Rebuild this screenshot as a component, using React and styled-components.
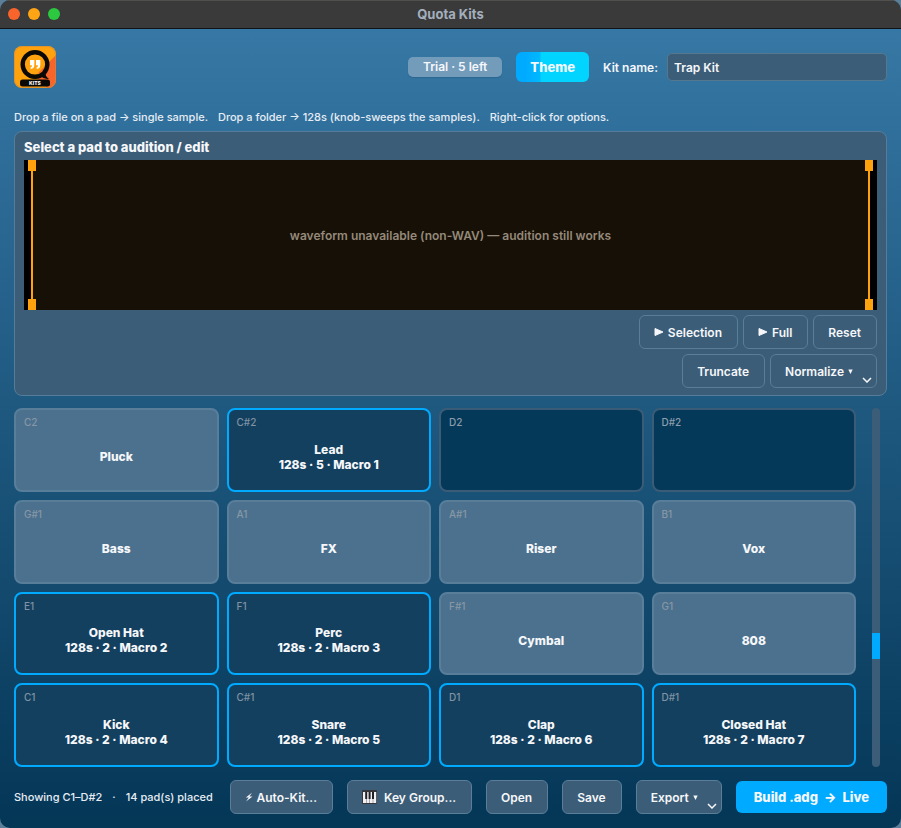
import React from "react";
import styled, { createGlobalStyle } from "styled-components";

const pads = [
  { note: "C2", name: "Pluck", kind: "plain" },
  { note: "C#2", name: "Lead", info: "128s · 5 · Macro 1", kind: "macro" },
  { note: "D2", kind: "empty" },
  { note: "D#2", kind: "empty" },
  { note: "G#1", name: "Bass", kind: "plain" },
  { note: "A1", name: "FX", kind: "plain" },
  { note: "A#1", name: "Riser", kind: "plain" },
  { note: "B1", name: "Vox", kind: "plain" },
  { note: "E1", name: "Open Hat", info: "128s · 2 · Macro 2", kind: "macro" },
  { note: "F1", name: "Perc", info: "128s · 2 · Macro 3", kind: "macro" },
  { note: "F#1", name: "Cymbal", kind: "plain" },
  { note: "G1", name: "808", kind: "plain" },
  { note: "C1", name: "Kick", info: "128s · 2 · Macro 4", kind: "macro" },
  { note: "C#1", name: "Snare", info: "128s · 2 · Macro 5", kind: "macro" },
  { note: "D1", name: "Clap", info: "128s · 2 · Macro 6", kind: "macro" },
  { note: "D#1", name: "Closed Hat", info: "128s · 2 · Macro 7", kind: "macro" },
];

const padColors = {
  plain: { back: "#4c718e", border: "#587e9a", note: "#8797a5" },
  macro: { back: "#14405f", border: "#00aaff", note: "#7f93a3" },
  empty: { back: "#053959", border: "#3b5c76", note: "#8c9dac" },
};

const Logo = () => (
  <svg width="42" height="42" viewBox="0 0 42 42" aria-hidden="true">
    <defs>
      <clipPath id="tile">
        <rect width="42" height="42" rx="8" />
      </clipPath>
    </defs>
    <g clipPath="url(#tile)">
      <rect width="42" height="42" fill="#ffa20d" />
      <path d="M42 9 L21 30 L33 42 H42Z" fill="#f7652b" />
      <circle cx="21" cy="18.500" r="12" fill="#ffa20d" />
      <path d="M31 20 A10 10 0 0 1 23 28Z" fill="#f7652b" />
      <circle cx="21" cy="18.500" r="12.300" fill="none" stroke="#0b0905" strokeWidth="4.400" />
      <path d="M25 29 L31 25 Q31 30 35 33 Q29 33 25 29Z" fill="#0b0905" />
      <path
        d="M16 14h4.300v5q0 3.400-3.300 4l-.7-1.200q1.700-.6 1.700-2.600H16z M22 14h4.300v5q0 3.400-3.300 4l-.7-1.200q1.700-.6 1.700-2.600H22z"
        fill="#fff"
      />
      <rect x="6" y="33.500" width="30" height="7" rx="2.500" fill="#0b0905" />
      <text
        x="21"
        y="39"
        textAnchor="middle"
        fontFamily="Inter, sans-serif"
        fontSize="5"
        fontWeight="800"
        fill="#fff"
      >
        KITS
      </text>
    </g>
    <rect x=".5" y=".5" width="41" height="41" rx="8" fill="none" stroke="#d18a3c" opacity=".6" />
  </svg>
);

const Play = () => (
  <svg width="10" height="10" viewBox="0 0 10 10" aria-hidden="true">
    <path
      d="M1 1.500v7L9 5z"
      fill="currentColor"
      stroke="currentColor"
      strokeLinejoin="round"
    />
  </svg>
);

const Bolt = () => (
  <svg width="8" height="10" viewBox="0 0 8 10" aria-hidden="true">
    <path d="M7 .8 .8 5.600h3L1 9.600 7.500 4.600H4.400z" fill="currentColor" />
  </svg>
);

const Piano = () => (
  <PianoIcon width="15" height="14" viewBox="0 0 15 14" aria-hidden="true">
    <rect width="15" height="14" rx="1" fill="#35363c" />
    <path d="M1 2h3v11H1z M4.400 2h3v11h-3z M7.800 2h3v11h-3z M11.200 2h3v11h-3z" fill="#f1f1f3" />
    <path d="M3.200 2h2v7h-2z M6.600 2h2v7h-2z M10 2h2v7h-2z" fill="#202127" />
  </PianoIcon>
);

const Chevron = () => (
  <ChevronIcon width="10" height="6" viewBox="0 0 10 6" aria-hidden="true">
    <path d="M1 1l4 4 4-4" fill="none" stroke="currentColor" strokeWidth="1.500" />
  </ChevronIcon>
);

const Caret = () => (
  <svg width="5" height="5" viewBox="0 0 5 5" aria-hidden="true">
    <path d="M.3 .5h4.400L2.500 5z" fill="currentColor" />
  </svg>
);

const App = () => {
  return (
    <>
      <GlobalStyle />
      <Window>
        <TitleBar>
          <Lights>
            <Light $color="#f9642c" />
            <Light $color="#ffa414" />
            <Light $color="#2bc840" />
          </Lights>
          <Title>Quota Kits</Title>
        </TitleBar>

        <Content>
          <Header>
            <Logo />
            <HeaderTools>
              <TrialBadge>Trial · 5 left</TrialBadge>
              <ThemeButton>Theme</ThemeButton>
              <KitField>
                <label htmlFor="kit-name">Kit name:</label>
                <KitInput id="kit-name" defaultValue="Trap Kit" />
              </KitField>
            </HeaderTools>
          </Header>

          <Hint>
            <span>Drop a file on a pad → single sample.</span>
            <span>Drop a folder → 128s (knob-sweeps the samples).</span>
            <span>Right-click for options.</span>
          </Hint>

          <Editor>
            <EditorTitle>Select a pad to audition / edit</EditorTitle>
            <Waveform>
              <Handle />
              <span>waveform unavailable (non-WAV) — audition still works</span>
              <Handle />
            </Waveform>
            <EditorRow>
              <Button>
                <Play /> Selection
              </Button>
              <Button>
                <Play /> Full
              </Button>
              <Button>Reset</Button>
            </EditorRow>
            <EditorRow>
              <Button>Truncate</Button>
              <MenuButton aria-haspopup="menu">
                Normalize <Caret />
                <Chevron />
              </MenuButton>
            </EditorRow>
          </Editor>

          <PadArea>
            <PadGrid>
              {pads.map((pad) => (
                <Pad key={pad.note} $kind={pad.kind}>
                  <PadNote $kind={pad.kind}>{pad.note}</PadNote>
                  <PadLabel>
                    <span>{pad.name}</span>
                    {pad.info && <span>{pad.info}</span>}
                  </PadLabel>
                </Pad>
              ))}
            </PadGrid>
            <ScrollTrack>
              <ScrollThumb />
            </ScrollTrack>
          </PadArea>

          <Footer>
            <Status>
              <span>Showing C1–D#2</span>
              <span>·</span>
              <span>14 pad(s) placed</span>
            </Status>
            <Button>
              <Bolt /> Auto-Kit...
            </Button>
            <Button>
              <Piano /> Key Group...
            </Button>
            <Button>Open</Button>
            <Button>Save</Button>
            <MenuButton aria-haspopup="menu">
              Export <Caret />
              <Chevron />
            </MenuButton>
            <BuildButton>
              <span>Build .adg</span>
              <span>→</span>
              <span>Live</span>
            </BuildButton>
          </Footer>
        </Content>
      </Window>
    </>
  );
};

export default App;

const GlobalStyle = createGlobalStyle`
  * {
    box-sizing: border-box;
  }

  body {
    margin: 0;
    background-color: #5b7f99;
    color: #f5f7fa;
    font-family: Inter, "Liberation Sans", sans-serif;
    font-size: 12px;
    font-weight: 600;
  }

  button, input {
    font: inherit;
    color: inherit;
  }
`;

const Window = styled.div`
  min-height: 100vh;
  display: flex;
  flex-direction: column;
  border-radius: 10px;
  overflow: hidden;
  background: linear-gradient(#387aa8, #043656);
`;

const TitleBar = styled.header`
  display: grid;
  grid-template-columns: 1fr auto 1fr;
  align-items: center;
  height: 29px;
  padding: 0 8px 1px;
  background-color: #3a3a3a;
  border-top: 1px solid #50504c;
  border-bottom: 1px solid #101418;
`;

const Lights = styled.div`
  display: flex;
  gap: 8px;
`;

const Light = styled.span`
  width: 12px;
  height: 12px;
  border-radius: 50%;
  background-color: ${(props) => props.$color};
`;

const Title = styled.h1`
  margin: 0;
  font-size: 13px;
  line-height: 16px;
  font-weight: 700;
  color: #a3afbd;
`;

const Content = styled.main`
  flex: 1;
  display: flex;
  flex-direction: column;
  padding: 17px 14px 14px;
`;

const Header = styled.div`
  display: flex;
  align-items: center;
  justify-content: space-between;
  height: 42px;
`;

const HeaderTools = styled.div`
  display: flex;
  align-items: center;
  gap: 14px;
`;

const TrialBadge = styled.span`
  padding: 0 15px;
  line-height: 20px;
  border-radius: 5px;
  background-color: #739bba;
  box-shadow: 0 1px 1px #2b6690;
`;

const ThemeButton = styled.button`
  height: 30px;
  padding: 0 14px;
  border: none;
  border-radius: 6px;
  font-size: 13px;
  font-weight: 800;
  background: linear-gradient(90deg, #00aaff 8px, #00b8ff 24px, #00d4ff 25px);
`;

const KitField = styled.div`
  display: flex;
  align-items: center;
  gap: 9px;
`;

const KitInput = styled.input`
  width: 220px;
  height: 28px;
  padding: 0 6px;
  border: 1px solid #56788f;
  border-radius: 5px;
  background-color: #3c5d77;
`;

const Hint = styled.p`
  display: flex;
  gap: 10px;
  margin: 21px 0 6px;
  font-size: 11px;
  line-height: 16px;
  font-weight: 500;
  color: #e6edf4;
`;

const Editor = styled.section`
  display: flex;
  flex-direction: column;
  gap: 5px;
  padding: 7px 9px;
  border: 1px solid #557c98;
  border-radius: 8px;
  background-color: #3c5d77;
`;

const EditorTitle = styled.h2`
  margin: 0;
  font-size: 13px;
  line-height: 16px;
  font-weight: 800;
`;

const Waveform = styled.div`
  display: flex;
  align-items: center;
  justify-content: space-between;
  height: 150px;
  padding: 0 4px;
  color: #94897a;
  background: linear-gradient(90deg, #000 7px, #171006 8px calc(100% - 8px), #000 calc(100% - 7px));
`;

const Handle = styled.div`
  display: flex;
  flex-direction: column;
  align-items: center;
  width: 8px;
  height: 100%;

  &::before,
  &::after {
    content: "";
    width: 8px;
    height: 100%;
    background: linear-gradient(90deg, transparent 3px, #ffa20d 3px 5px, transparent 5px);
    border-top: 11px solid #ffa20d;
  }

  &::after {
    border-top: none;
    border-bottom: 11px solid #ffa20d;
  }
`;

const EditorRow = styled.div`
  display: flex;
  justify-content: flex-end;
  gap: 5px;
`;

const Button = styled.button`
  display: flex;
  align-items: center;
  gap: 4px;
  height: 34px;
  padding: 0 15px 0 14px;
  border: 1px solid #5a7d98;
  border-radius: 6px;
  background-color: #3c5d77;
  white-space: nowrap;
`;

const MenuButton = styled(Button)`
  position: relative;
  padding-right: 23px;
`;

const ChevronIcon = styled.svg`
  position: absolute;
  right: 4px;
  bottom: 4px;
`;

const PianoIcon = styled.svg`
  margin-right: 3px;
`;

const PadArea = styled.section`
  display: flex;
  gap: 16px;
  height: 359px;
  padding-right: 7px;
  margin: 12px 0 13px;
`;

const PadGrid = styled.div`
  flex: 1;
  display: grid;
  grid-template-columns: repeat(4, 1fr);
  grid-template-rows: repeat(4, 1fr);
  gap: 8px;
`;

const Pad = styled.button`
  display: flex;
  flex-direction: column;
  padding: 5px 8px;
  border: 2px solid ${(props) => padColors[props.$kind].border};
  border-radius: 8px;
  background-color: ${(props) => padColors[props.$kind].back};
  text-align: left;
`;

const PadNote = styled.span`
  font-size: 10px;
  line-height: 14px;
  font-weight: 500;
  color: ${(props) => padColors[props.$kind].note};
`;

const PadLabel = styled.span`
  flex: 1;
  display: flex;
  flex-direction: column;
  align-items: center;
  align-self: stretch;
  justify-content: center;
  line-height: 15px;
  font-weight: 800;
`;

const ScrollTrack = styled.div`
  display: grid;
  grid-template-rows: 225fr 26fr 108fr;
  width: 8px;
  border-radius: 4px;
  background-color: #3c5d77;
`;

const ScrollThumb = styled.div`
  grid-row: 2;
  background-color: #00aaff;
`;

const Footer = styled.footer`
  display: flex;
  align-items: center;
  gap: 14px;
`;

const Status = styled.div`
  flex: 1;
  display: flex;
  gap: 10px;
  font-size: 11px;
  font-weight: 500;
  color: #e6edf4;
  white-space: nowrap;
`;

const BuildButton = styled.button`
  display: flex;
  align-items: center;
  gap: 6px;
  height: 32px;
  padding: 0 18px;
  border: none;
  border-radius: 6px;
  font-size: 13px;
  font-weight: 800;
  background-color: #00aaff;
  white-space: nowrap;
`;
